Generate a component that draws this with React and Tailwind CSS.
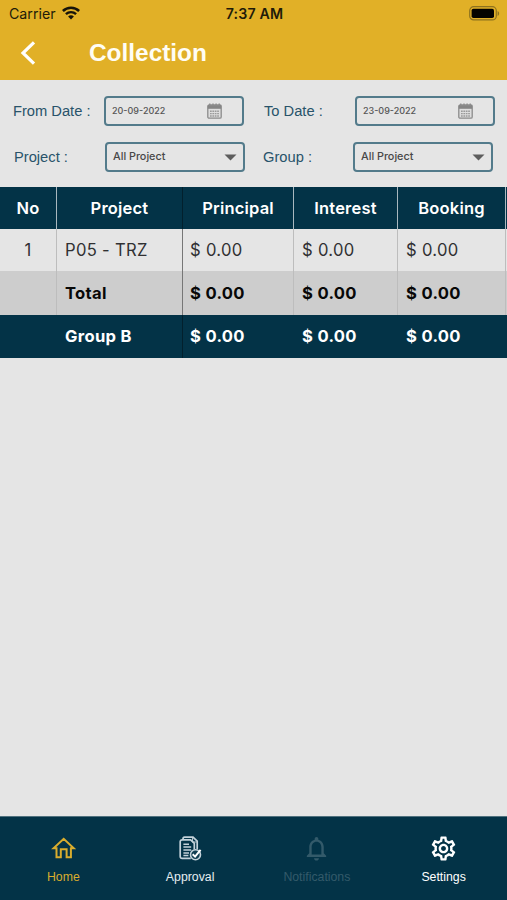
import React from "react";
import clsx from "clsx";
import { MdNotificationsNone, MdOutlineSettings } from "react-icons/md";

const rows = [
  { no: "1", project: "P05 - TRZ", type: "item" },
  { no: "", project: "Total", type: "total" },
  { no: "", project: "Group B", type: "group" },
];

const rowStyles = {
  item: "h-[42px] tracking-[0.3px] text-[#303032]",
  total: "h-11 bg-[#cdcdcd] font-bold tracking-[0.3px] text-[#080808]",
  group: "h-[43px] bg-[#033347] font-bold tracking-[0.3px] text-white",
};

function WifiIcon() {
  return (
    <svg width="18" height="14" viewBox="0 0 18 14" fill="none" stroke="#17140a">
      <path d="M0.9 5C5.4 0.5 12.6 0.5 17.1 5" strokeWidth="2.5" />
      <path d="M3.9 8.2C6.8 5.4 11.2 5.4 14.1 8.2" strokeWidth="2.4" />
      <path d="M9 13.4L6.1 10.4C7.8 8.9 10.2 8.9 11.9 10.4Z" fill="#17140a" stroke="none" />
    </svg>
  );
}

function BatteryIcon() {
  return (
    <svg width="31" height="15" viewBox="0 0 31 15">
      <rect x="0.7" y="0.7" width="26.6" height="13.2" rx="4" fill="none" stroke="#8d721f" strokeWidth="1.2" />
      <rect x="2.6" y="2.8" width="22.4" height="9.2" rx="1.8" fill="#050400" />
      <path d="M28.6 5V10C30.6 9.2 30.6 5.8 28.6 5Z" fill="#8d721f" />
    </svg>
  );
}

function CalendarIcon() {
  return (
    <svg width="15" height="16" viewBox="0 0 15 16">
      <path d="M2.8 0.4V3M6 0.4V3M9.1 0.4V3M12.2 0.4V3" stroke="#858585" strokeWidth="1.3" />
      <rect x="0.8" y="2" width="13.4" height="13.2" rx="1.3" fill="#dedede" stroke="#8c8c8c" strokeWidth="1.3" />
      <path d="M0.8 2.2H14.2V5.8H0.8Z" fill="#858585" />
      <path d="M3 8.2H12M3 10.6H12M3 13H12" stroke="#9a9a9a" strokeWidth="1.4" strokeDasharray="1.7 0.7" />
    </svg>
  );
}

function HomeIcon() {
  return (
    <svg width="26" height="26" viewBox="0 0 26 26" fill="none" stroke="currentColor" strokeWidth="2">
      <path d="M3.6 12.2H6.5V21.2H10.8V13.2H16.6V21.2H20.9V12.2H23.8L13.7 2.8Z" />
    </svg>
  );
}

function ApprovalIcon() {
  return (
    <svg width="26" height="26" viewBox="0 0 26 26" fill="none" stroke="#c3d2da" strokeWidth="1.7">
      <path d="M6 3.6V2.9C6 1.6 6.4 1.2 7.6 1.2H16L20.2 5.2V13.5" />
      <path d="M15.6 2V6H19.8" strokeWidth="1" />
      <path d="M13.8 22.3H5.2C3.8 22.3 3.2 21.7 3.2 20.3V5.8C3.2 4.4 3.8 3.8 5.2 3.8H13.6L17.3 7.3V13.5" />
      <path d="M6.4 8.2H12M6.4 11.1H14.2M6.4 14H14.2M6.4 16.9H12M6.4 19.5H11.4" strokeWidth="1.5" />
      <circle cx="18.5" cy="18.7" r="5" fill="#123f52" strokeWidth="1.6" />
      <path d="M15.7 18.2L18.1 20.6L23.6 13.8" stroke="#fff" strokeWidth="2" />
    </svg>
  );
}

function DateField({ value }) {
  return (
    <div className="flex h-[30px] w-[140px] items-center justify-between rounded-[4px] border-2 border-[#537b8b] pr-5 pl-1.5">
      <span className="mb-px font-['Inter',sans-serif] text-[9px] font-medium text-[#555]">{value}</span>
      <CalendarIcon />
    </div>
  );
}

function SelectField({ value }) {
  return (
    <div className="flex h-[30px] w-[140px] items-center justify-between rounded-[4px] border-2 border-[#537b8b] pr-1.5 pl-1.5">
      <span className="mt-px font-['Inter',sans-serif] text-[10.8px] font-medium text-[#484848]">{value}</span>
      <svg width="13" height="7" viewBox="0 0 13 7">
        <path d="M0.5 0.4H12.5L6.5 6.6Z" fill="#5d5d5d" />
      </svg>
    </div>
  );
}

function NavItem({ label, icon, className }) {
  return (
    <div className={clsx("flex flex-1 flex-col items-center text-[12.3px]", className)}>
      <div className="flex h-[26px] items-center">{icon}</div>
      <span className="mt-[7px] leading-4">{label}</span>
    </div>
  );
}

export default function App() {
  return (
    <div className="flex h-[900px] w-[507px] flex-col overflow-hidden bg-[#e5e5e5] font-['Liberation_Sans',sans-serif]">
      <header className="h-20 shrink-0 bg-[#e1b027]">
        <div className="grid h-[27px] grid-cols-3 items-center pr-[7px] pl-[9px] font-['Inter',sans-serif] text-[14.2px] text-[#211b09]">
          <div className="flex items-center gap-1.5">
            <span>Carrier</span>
            <WifiIcon />
          </div>
          <span className="text-center font-semibold tracking-[0.15px]">7:37 AM</span>
          <div className="flex justify-end">
            <BatteryIcon />
          </div>
        </div>
        <div className="flex h-[52px] items-center pl-5">
          <svg width="16" height="24" viewBox="0 0 16 24" fill="none" stroke="#fff" strokeWidth="3.2">
            <path d="M14 1.3L3 12L14 22.7" />
          </svg>
          <h1 className="ml-[53px] text-[24.4px] font-bold text-[#fffdf4]">Collection</h1>
        </div>
      </header>

      <section className="flex h-[107px] shrink-0 flex-col gap-4 pt-4 text-[14.7px] text-[#28536a]">
        <div className="flex items-center">
          <span className="w-[104px] pl-[13px]">From Date :</span>
          <DateField value="20-09-2022" />
          <span className="w-[111px] pl-5">To Date :</span>
          <DateField value="23-09-2022" />
        </div>
        <div className="flex items-center">
          <span className="w-[105px] pl-[14px]">Project :</span>
          <SelectField value="All Project" />
          <span className="w-[108px] pl-[18px]">Group :</span>
          <SelectField value="All Project" />
        </div>
      </section>

      <table className="w-[620px] table-fixed border-separate border-spacing-0 font-['Inter',sans-serif] text-[16.6px]">
        <colgroup>
          <col className="w-[57px]" />
          <col className="w-[126px]" />
          <col className="w-[111px]" />
          <col className="w-[104px]" />
          <col className="w-[108px]" />
          <col />
        </colgroup>
        <thead>
          <tr className="h-[42px] bg-[#033347] text-[16.5px] text-white">
            {["No", "Project", "Principal", "Interest", "Booking", ""].map((title, i) => (
              <th
                key={i}
                className={clsx(
                  "border-r p-0 font-semibold tracking-[0.2px]",
                  i === 1 ? "border-[#02202d]" : "border-[#a9b8bf]"
                )}
              >
                {title}
              </th>
            ))}
          </tr>
        </thead>
        <tbody>
          {rows.map((row) => {
            const line = row.type === "group" ? "border-transparent" : "border-[#bdbdbd]";
            return (
              <tr key={row.project} className={rowStyles[row.type]}>
                <td className={clsx("border-r p-0 text-center", line)}>{row.no}</td>
                <td className={clsx("border-r p-0 pl-2", row.type === "group" ? "border-[#02202d]" : "border-[#777]")}>
                  {row.project}
                </td>
                {[0, 1, 2].map((i) => (
                  <td key={i} className={clsx("border-r p-0", i === 0 ? "pl-[7px]" : "pl-2", line)}>
                    $ 0.00
                  </td>
                ))}
                <td className="p-0" />
              </tr>
            );
          })}
        </tbody>
      </table>

      <nav className="mt-auto flex h-[84px] shrink-0 border-t border-[#50717e] bg-[#033347] pt-[19px]">
        <NavItem label="Home" icon={<HomeIcon />} className="text-[#d9ad2e]" />
        <NavItem label="Approval" icon={<ApprovalIcon />} className="text-[#e5edf0]" />
        <NavItem label="Notifications" icon={<MdNotificationsNone className="-mt-0.5" size={29} />} className="text-[#335a6a]" />
        <NavItem label="Settings" icon={<MdOutlineSettings className="-mt-0.5" size={29} />} className="text-white" />
      </nav>
    </div>
  );
}
